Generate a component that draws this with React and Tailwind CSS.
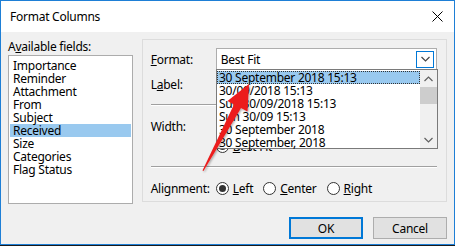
import React from 'react';

const FIELDS = ['Importance', 'Reminder', 'Attachment', 'From', 'Subject', 'Received', 'Size', 'Categories', 'Flag Status'];
const FORMATS = [
    '30 September 2018 15:13',
    '30/09/2018 15:13',
    'Sun 30/09/2018 15:13',
    'Sun 30/09 15:13',
    '30 September 2018',
    '30 September, 2018',
];

const font = { fontFamily: '"Noto Sans", "Segoe UI", sans-serif' };

const Radio = ({ checked }) => (
    <span className="w-[13px] h-[13px] rounded-full border border-[#333] bg-white flex items-center justify-center shrink-0">
        {checked && <span className="w-[7px] h-[7px] rounded-full bg-[#333]" />}
    </span>
);

const Chevron = ({ up, className }) => (
    <svg width="9" height="6" viewBox="0 0 9 6" className={className}>
        <path d={up ? 'M0.5 5 L4.5 1 L8.5 5' : 'M0.5 1 L4.5 5 L8.5 1'} fill="none" stroke="currentColor" strokeWidth="1.2" />
    </svg>
);

const App = () => {
    return (
        <div className="w-[455px] h-[246px] bg-[#1b1b1b] text-[12px] leading-[13px] tracking-[-0.25px] text-black" style={font}>
            <div className="w-[455px] h-[245px] border border-[#1e7fd6] bg-[#f0f0f0] flex flex-col relative">
                {/* Title bar */}
                <div className="h-[31px] bg-white flex items-center justify-between pl-[9px] pr-[11px] shrink-0">
                    <span className="text-[12px]">Format Columns</span>
                    <svg width="11" height="11" viewBox="0 0 11 11">
                        <path d="M0.5 0.5 L10.5 10.5 M10.5 0.5 L0.5 10.5" stroke="#000" strokeWidth="1" />
                    </svg>
                </div>

                {/* Body */}
                <div className="flex-1 flex flex-col px-[7px]">
                    <div className="flex gap-[9px] pt-[7px]">
                        {/* Available fields */}
                        <div className="flex flex-col w-[125px]">
                            <span className="h-[14px] mt-[1px]">
                                A<span className="underline">v</span>ailable fields:
                            </span>
                            <div className="mt-[1px] h-[149px] border border-[#acacac] bg-white pt-[3px] px-[1px]">
                                {FIELDS.map((f) => (
                                    <div
                                        key={f}
                                        className={`h-[13px] pl-[3px] whitespace-nowrap ${f === 'Received' ? 'bg-[#99c9ef]' : ''}`}
                                    >
                                        {f}
                                    </div>
                                ))}
                            </div>
                        </div>

                        {/* Group box */}
                        <div className="w-[306px] h-[163px] border border-[#dcdcdc] pl-[8px] pr-[9px] flex flex-col">
                            <div className="flex items-center mt-[8px] h-[22px]">
                                <span className="w-[65px]"><span className="underline">F</span>ormat:</span>
                                <div className="flex-1 h-[22px] border border-[#adadad] bg-white flex items-center pl-[4px] pr-[2px] justify-between">
                                    <span>Best Fit</span>
                                    <span className="w-[18px] h-[17px] border border-[#0078d7] bg-white flex items-center justify-center text-[#444]">
                                        <Chevron />
                                    </span>
                                </div>
                            </div>
                            <div className="flex items-center mt-[4px] h-[20px]">
                                <span className="w-[65px]">L<span className="underline">a</span>bel:</span>
                                <div className="flex-1 h-[20px] border border-[#adadad] bg-white" />
                            </div>
                            <div className="mt-[10px] border-t border-[#a0a0a0] border-b border-b-white" />
                            <div className="flex items-center mt-[10px] h-[20px]">
                                <span className="w-[65px]">Width:</span>
                                <div className="w-[60px] h-[20px] border border-[#adadad] bg-white" />
                            </div>
                            <div className="flex items-center gap-[4px] mt-[4px] h-[13px] pl-[65px]">
                                <Radio checked />
                                <span><span className="underline">B</span>est Fit</span>
                            </div>
                            <div className="mt-[13px] border-t border-[#a0a0a0] border-b border-b-white" />
                            <div className="flex items-center mt-[12px] h-[16px]">
                                <span className="w-[65px]">Alignment:</span>
                                <div className="flex items-center gap-[4px]">
                                    <Radio checked />
                                    <span><span className="underline">L</span>eft</span>
                                </div>
                                <div className="flex items-center gap-[4px] ml-[10px]">
                                    <Radio />
                                    <span><span className="underline">C</span>enter</span>
                                </div>
                                <div className="flex items-center gap-[4px] ml-[10px]">
                                    <Radio />
                                    <span><span className="underline">R</span>ight</span>
                                </div>
                            </div>
                        </div>
                    </div>

                    {/* Buttons */}
                    <div className="flex justify-end gap-[10px] mt-[13px]">
                        <button className="w-[74px] h-[22px] border-2 border-[#0078d7] bg-[#e1e1e1] text-[12px]">OK</button>
                        <button className="w-[74px] h-[22px] border border-[#adadad] bg-[#e1e1e1] text-[12px]">Cancel</button>
                    </div>
                </div>

                {/* Open dropdown list */}
                <div className="absolute left-[215px] top-[68px] w-[222px] h-[80px] border border-[#7a7a7a] bg-white flex">
                    <div className="flex-1 flex flex-col pt-[1px]">
                        {FORMATS.map((f, i) => (
                            <div
                                key={f}
                                className={`h-[13px] pl-[2px] whitespace-nowrap ${i === 0 ? 'bg-[#99c9ef] outline outline-1 outline-dotted outline-[#333] -outline-offset-1' : ''}`}
                            >
                                {f}
                            </div>
                        ))}
                    </div>
                    <div className="w-[17px] bg-[#f0f0f0] flex flex-col items-center text-[#606060]">
                        <div className="h-[17px] flex items-center justify-center"><Chevron up /></div>
                        <div className="w-[17px] h-[17px] bg-[#cdcdcd]" />
                        <div className="flex-1" />
                        <div className="h-[17px] flex items-center justify-center"><Chevron /></div>
                    </div>
                </div>

                {/* Red annotation arrow */}
                <svg className="absolute left-0 top-0 pointer-events-none" width="455" height="246" viewBox="0 0 455 246">
                    <defs>
                        <filter id="sh" x="-20%" y="-20%" width="140%" height="140%">
                            <feDropShadow dx="1" dy="1" stdDeviation="1" floodColor="#000" floodOpacity="0.35" />
                        </filter>
                    </defs>
                    <polygon
                        points="248,83 246.5,110.5 240,107 202.5,170 201.5,169.5 233,103.5 226.5,100"
                        fill="#ec1c1c"
                        filter="url(#sh)"
                    />
                </svg>
            </div>
        </div>
    );
};

export default App;
